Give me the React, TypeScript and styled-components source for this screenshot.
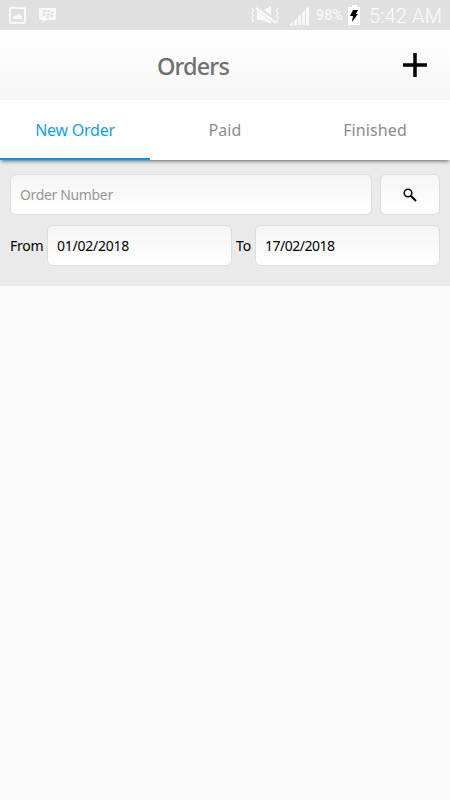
import React from "react";
import styled, { createGlobalStyle } from "styled-components";

const Global = createGlobalStyle`
  * { box-sizing: border-box; }
  body { margin: 0; background: #fafafa; font-family: "Noto Sans", sans-serif; }
`;

const Screen = styled.main`
  display: flex;
  flex-direction: column;
  width: 450px;
  height: 800px;
  background: #fafafa;
  overflow: hidden;
`;

const StatusBar = styled.div`
  display: flex;
  align-items: center;
  flex: 0 0 30px;
  background: #e0e0e0;
  color: #fcfcfc;
`;

const StatusIcons = styled.svg`
  display: block;
  flex: none;
`;

const StatusText = styled.span<{ $size: number; $width: number; $spacing?: number; $gap?: number }>`
  font-family: Roboto, sans-serif;
  font-weight: ${(p) => (p.$size > 16 ? 300 : 400)};
  font-size: ${(p) => p.$size}px;
  line-height: 28px;
  width: ${(p) => p.$width}px;
  margin-left: ${(p) => p.$gap ?? 0}px;
  letter-spacing: ${(p) => p.$spacing ?? 0}px;
  padding-top: 2px;
  white-space: nowrap;
`;

const Spacer = styled.div`
  flex: 1;
`;

const Header = styled.header`
  display: grid;
  grid-template-columns: 1fr 64px;
  align-items: center;
  flex: 0 0 70px;
  background: linear-gradient(#ffffff, #f6f6f6);
`;

const Title = styled.h1`
  margin: 0;
  padding: 2px 0 0 157px;
  color: #707070;
  font-size: 23.500px;
  line-height: 34px;
  font-weight: 500;
  letter-spacing: -0.900px;
`;

const IconButton = styled.button`
  display: grid;
  place-items: center;
  padding: 0 6px 0 0;
  border: 0;
  background: transparent;
`;

const Tabs = styled.nav`
  display: grid;
  grid-template-columns: repeat(3, 1fr);
  flex: 0 0 60px;
  background: #fff;
  box-shadow: 0 2px 4px -1px rgba(0, 0, 0, 0.6);
  clip-path: inset(0 0 -10px 0);
  z-index: 1;
`;

const Tab = styled.button<{ $active?: boolean; $spacing: number }>`
  border: 0;
  border-bottom: 2px solid ${(p) => (p.$active ? "#1295e0" : "transparent")};
  padding: 2px 0 0;
  background: transparent;
  color: ${(p) => (p.$active ? "#159de9" : "#8c8c8c")};
  font: 400 16px "Noto Sans", sans-serif;
  letter-spacing: ${(p) => p.$spacing}px;
`;

const Filters = styled.section`
  display: flex;
  flex-direction: column;
  gap: 10px;
  flex: 0 0 126px;
  padding: 14px 10px 0;
  background: #eaeaea;
`;

const Row = styled.div<{ $gap: number }>`
  display: flex;
  align-items: center;
  gap: ${(p) => p.$gap}px;
`;

const Field = styled.div<{ $width: number; $muted?: boolean; $spacing?: number }>`
  width: ${(p) => p.$width}px;
  height: 41px;
  padding: 1px 9px 0;
  border: 1px solid #dcdcdc;
  border-radius: 6px;
  background: linear-gradient(#f5f5f5, #ffffff);
  color: ${(p) => (p.$muted ? "#969696" : "#000")};
  font-size: 14px;
  line-height: 38px;
  letter-spacing: ${(p) => p.$spacing ?? 0}px;
  white-space: nowrap;
`;

const SearchButton = styled.button`
  display: grid;
  place-items: center;
  width: 60px;
  height: 41px;
  padding: 0;
  border: 1px solid #dcdcdc;
  border-radius: 6px;
  background: linear-gradient(#f7f7f7, #ffffff);
`;

const Label = styled.span<{ $width: number; $gap?: number; $spacing?: number }>`
  width: ${(p) => p.$width}px;
  margin-left: ${(p) => p.$gap ?? 0}px;
  font-size: 14px;
  line-height: 20px;
  padding-top: 1px;
  letter-spacing: ${(p) => p.$spacing ?? 0}px;
  white-space: nowrap;
`;

export default function App() {
  return (
    <Screen>
      <Global />
      <StatusBar>
        <StatusIcons width="60" height="30" viewBox="0 0 60 30">
          <rect x="10" y="8" width="15" height="15" rx="1" fill="none" stroke="#f8f8f8" strokeWidth="2" />
          <path d="M13 19v-2l2-2 1 .7 2-2.2 2 2 1-.5 1 2v2z" fill="#f8f8f8" />
          <path d="M40 8h15q1 0 1 1v10q0 1-1 1h-9l-4 3 1-3h-3q-1 0-1-1V9q0-1 1-1z" fill="#f8f8f8" />
          <path d="M43.500 10h2.500v2h-3zm4 0h2.500v2h-3zm-4.500 3.500h2.500v2h-3zm4 0h2.500v2h-3zm4-1.800h2.500v2h-3zm-4.500 4.500h2.500v2h-3zm4-1.500h2.500v2h-3z" fill="#dedede" />
        </StatusIcons>
        <Spacer />
        <StatusIcons width="66" height="30" viewBox="0 0 66 30">
          <path d="M7 11h5l9-5v18l-9-4H7z" fill="#f8f8f8" />
          <path d="M6 7l20 15" stroke="#e0e0e0" strokeWidth="5" />
          <path d="M6 8l20 15" stroke="#f8f8f8" strokeWidth="2.200" />
          <path d="M2 8l1.500 2.500-1.500 2.500 1.500 2.500-1.500 2.500 1.500 2.500-1.500 2M28 8l-1.500 2.500 1.500 2.500-1.500 2.500 1.500 2.500-1.500 2.500 1.500 2" fill="none" stroke="#f8f8f8" strokeWidth="1.300" />
          <path d="M39 25l4-3v3zm5 0v-4l3-3v7zm4 0v-8l3-3v11zm4 0V13l3-3v15zm4 0V9l3-3v19z" fill="#f8f8f8" />
        </StatusIcons>
        <StatusText $size={14.5} $width={31}>98%</StatusText>
        <StatusIcons width="15" height="30" viewBox="0 0 15 30">
          <path d="M5 5h5v2h3v18H1V7h4z" fill="#fff" />
          <path d="M6 10h5l-2 4h2l-6 8 1-6H3z" fill="#000" />
        </StatusIcons>
        <StatusText $size={20} $width={81} $gap={7} $spacing={0.15}>5:42 AM</StatusText>
      </StatusBar>
      <Header>
        <Title>Orders</Title>
        <IconButton aria-label="Add">
          <svg width="24" height="24" viewBox="0 0 24 24">
            <path d="M12 0v24M0 12h24" stroke="#000" strokeWidth="3.500" />
          </svg>
        </IconButton>
      </Header>
      <Tabs>
        <Tab $active $spacing={-0.25}>New Order</Tab>
        <Tab $spacing={0.1}>Paid</Tab>
        <Tab $spacing={0.1}>Finished</Tab>
      </Tabs>
      <Filters>
        <Row $gap={8}>
          <Field $width={362} $muted $spacing={-0.35}>Order Number</Field>
          <SearchButton aria-label="Search">
            <svg width="14" height="14" viewBox="0 0 14 14" fill="none" stroke="#000">
              <circle cx="5" cy="5" r="3.800" strokeWidth="1.500" />
              <path d="M8 8l5 5" strokeWidth="2" />
            </svg>
          </SearchButton>
        </Row>
        <Row $gap={0}>
          <Label $width={37} $spacing={-0.25}>From</Label>
          <Field $width={185} $spacing={-0.25}>01/02/2018</Field>
          <Label $width={19} $gap={4}>To</Label>
          <Field $width={185} $spacing={-0.5}>17/02/2018</Field>
        </Row>
      </Filters>
    </Screen>
  );
}
